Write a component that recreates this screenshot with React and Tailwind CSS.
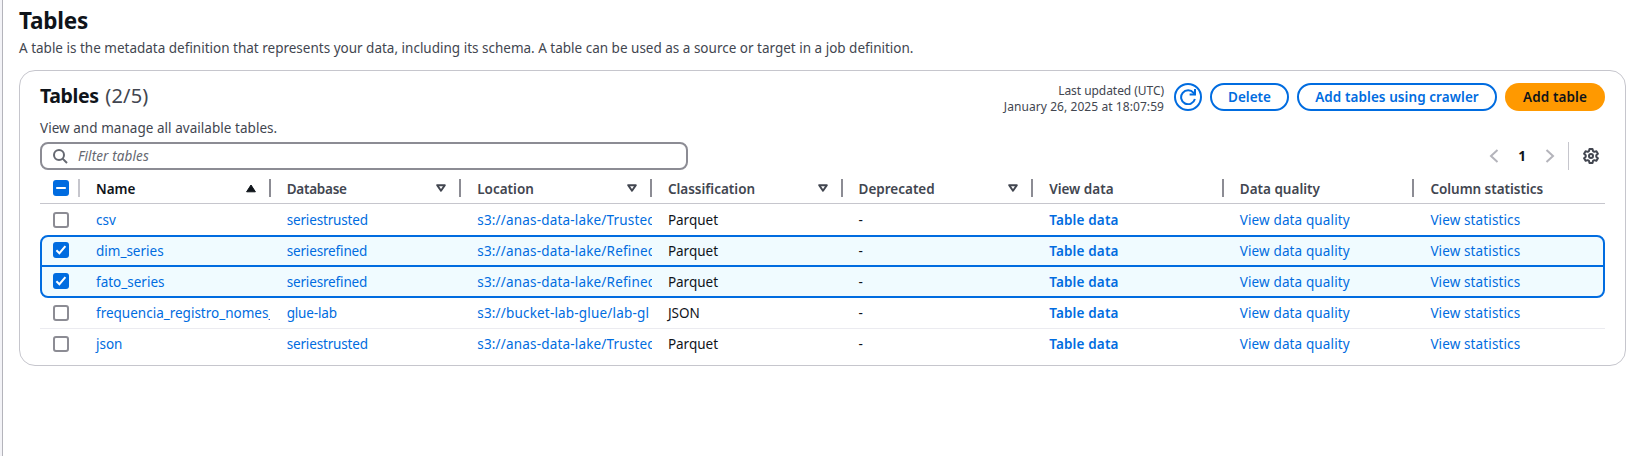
import React from "react";

const COLUMNS = [
  { label: "Name", sort: "asc" },
  { label: "Database", sort: "none", track: "tracking-[-0.25px]" },
  { label: "Location", sort: "none" },
  { label: "Classification", sort: "none" },
  { label: "Deprecated", sort: "none" },
  { label: "View data" },
  { label: "Data quality" },
  { label: "Column statistics", track: "tracking-[-0.03px]" },
];

const ROWS = {
  csv: ["csv", "seriestrusted", "s3://anas-data-lake/Trusted", "Parquet"],
  dim: ["dim_series", "seriesrefined", "s3://anas-data-lake/Refined", "Parquet"],
  fato: ["fato_series", "seriesrefined", "s3://anas-data-lake/Refined", "Parquet"],
  freq: ["frequencia_registro_nomes_", "glue-lab", "s3://bucket-lab-glue/lab-gl", "JSON"],
  json: ["json", "seriestrusted", "s3://anas-data-lake/Trusted", "Parquet"],
};

function Checkbox({ state, className = "" }) {
  if (!state) {
    return <span className={`block size-4 rounded-[3px] border-2 border-[#8c8c94] bg-white ${className}`} />;
  }
  return (
    <span className={`block size-4 rounded-[3px] bg-[#006ce0] ${className}`}>
      <svg viewBox="0 0 16 16" className="size-4" fill="none" stroke="#fff" strokeWidth="2">
        {state === "mixed" ? <path d="M3.2 8h9.6" /> : <path d="M3.4 8.2l3 3L12.4 4.2" />}
      </svg>
    </span>
  );
}

function SortIcon({ sort }) {
  return (
    <svg viewBox="0 0 16 16" className="size-4" strokeLinejoin="round">
      {sort === "asc" ? (
        <path d="M8 5l4.4 6.8H3.6z" fill="#0f141a" stroke="#0f141a" strokeWidth="1" />
      ) : (
        <path d="M4.2 5.2h7.6L8 10.8z" fill="none" stroke="#424650" strokeWidth="2" />
      )}
    </svg>
  );
}

function Row({ row, checked, inset, className }) {
  const [name, database, location, classification] = row;
  return (
    <div className={`grid text-[#006ce0] ${inset ? "grid-cols-[38px_repeat(8,190.625px)]" : "grid-cols-[40px_repeat(8,190.625px)]"} ${className}`}>
      <div className={inset ? "pl-[11px]" : "pl-[13px]"}>
        <Checkbox state={checked ? "on" : null} className={checked ? "mt-px" : "mt-0.5"} />
      </div>
      <div className="mr-px overflow-hidden whitespace-nowrap pl-4">{name}</div>
      <div className="overflow-hidden whitespace-nowrap pl-4 tracking-[-0.15px]">{database}</div>
      <div className="overflow-hidden whitespace-nowrap pl-4 tracking-[0.18px]">{location}</div>
      <div className="pl-4 text-[#0f141a]">{classification}</div>
      <div className="pl-4 text-[#0f141a]">-</div>
      <div className="pl-4 font-semibold tracking-[0.16px]">Table data</div>
      <div className="pl-4 tracking-[0.13px]">View data quality</div>
      <div className="pl-4 tracking-[0.12px]">View statistics</div>
    </div>
  );
}

export default function App() {
  return (
    <div className="flex h-[456px] w-[1642px] overflow-hidden bg-white font-['Noto_Sans',sans-serif] text-[13.5px] leading-5 text-[#0f141a]">
      <div className="w-[3px] shrink-0 border-r border-[#b4b4bb] bg-[#f3f3f7]" />
      <main className="w-[1623px] pl-4">
        <h1 className="mt-1.5 h-[30px] text-[22.5px] font-bold leading-[30px] tracking-[-0.2px]">Tables</h1>
        <p className="mt-0.5 h-5 text-[#424650]">
          A table is the metadata definition that represents your data, including its schema. A table can be used as a source or target in a job definition.
        </p>

        <section className="mt-3 h-[296px] rounded-2xl border border-[#c6c6cd] px-5">
          <div className="flex h-[46px] justify-between">
            <h2 className="mt-[13px] h-6 text-[19.5px] font-bold leading-6 tracking-[-0.4px]">
              Tables <span className="ml-0.5 text-[20px] font-normal tracking-[0.2px] text-[#424650]">(2/5)</span>
            </h2>
            <div className="mt-3 flex h-7 text-sm font-semibold">
              <div className="mr-2.5 text-right text-xs font-normal leading-4 text-[#424650]">
                <div className="tracking-[-0.05px]">Last updated (UTC)</div>
                <div className="tracking-[0.07px]">January 26, 2025 at 18:07:59</div>
              </div>
              <button className="mr-2 flex size-7 items-center justify-center rounded-full border-2 border-[#006ce0]">
                <svg viewBox="0 0 16 16" className="size-4" fill="none" stroke="#006ce0" strokeWidth="2">
                  <path d="M14.9 10.1A7 7 0 1 1 13.6 3.9L14.9 5.6" />
                  <path d="M15 0v5.6H9.6" />
                </svg>
              </button>
              <button className="mr-2 h-7 w-[79px] rounded-full border-2 border-[#006ce0] text-[13.5px] leading-6 text-[#006ce0]">Delete</button>
              <button className="mr-2 h-7 w-[200px] rounded-full border-2 border-[#006ce0] text-[13.5px] leading-6 tracking-[0.07px] text-[#006ce0]">Add tables using crawler</button>
              <button className="h-7 w-[100px] rounded-full bg-[#ff9900] text-[13.5px] leading-7 tracking-[0.1px]">Add table</button>
            </div>
          </div>
          <p className="h-[25px] pt-px tracking-[0.04px] text-[#424650]">View and manage all available tables.</p>

          <div className="flex h-7 items-center justify-between">
            <div className="flex h-7 w-[648px] items-center rounded-lg border-2 border-[#8c8c94]">
              <svg viewBox="0 0 16 16" className="ml-2.5 size-4" fill="none" stroke="#656871" strokeWidth="2">
                <circle cx="7" cy="7" r="5" />
                <path d="M10.6 10.6L15 15" />
              </svg>
              <span className="ml-2.5 italic tracking-[0.1px] text-[#656871]">Filter tables</span>
            </div>
            <div className="flex h-7 items-center">
              <svg viewBox="0 0 16 16" className="size-4" fill="none" stroke="#b4b4bb" strokeWidth="2">
                <path d="M11.5 2L5 8l6.5 6" />
              </svg>
              <span className="w-10 text-center font-bold">1</span>
              <svg viewBox="0 0 16 16" className="size-4" fill="none" stroke="#b4b4bb" strokeWidth="2">
                <path d="M4.5 2L11 8l-6.5 6" />
              </svg>
              <span className="ml-2.5 h-7 w-px bg-[#c6c6cd]" />
              <svg viewBox="0 0 16 16" className="ml-3.5 mr-1.5 size-4" fill="none" stroke="#424650" strokeWidth="2" strokeLinejoin="round">
                <path d="M6.5 1h3l.5 2.1 1.3.75 2.1-.65 1.5 2.6L13.3 7.2v1.6l1.6 1.4-1.5 2.6-2.1-.65-1.3.75L9.5 15h-3L6 12.9l-1.3-.75-2.1.65-1.5-2.6 1.6-1.4V7.2L1.1 5.8l1.5-2.6 2.1.65L6 3.1z" />
                <circle cx="8" cy="8" r="2" />
              </svg>
            </div>
          </div>

          <div className="mt-1 grid h-[30px] grid-cols-[40px_repeat(8,190.625px)] border-b border-[#c6c6cd] pt-[5px] font-semibold text-[#424650]">
            <div className="flex justify-between pl-[13px]">
              <Checkbox state="mixed" className="mt-px" />
              <span className="h-[18px] w-0.5 bg-[#c6c6cd]" />
            </div>
            {COLUMNS.map(({ label, sort, track = "" }, i) => (
              <div key={label} className="flex h-[18px] pl-4">
                <span className={`${track} ${i === 0 ? "text-[#0f141a]" : ""}`}>{label}</span>
                <span className="ml-auto mr-2.5 mt-px">{sort && <SortIcon sort={sort} />}</span>
                {i < 7 && <span className="h-[18px] w-0.5 bg-[#8c8c94]" />}
              </div>
            ))}
          </div>

          <Row row={ROWS.csv} className="h-[31px] pt-1.5" />
          <div className="h-[63px] rounded-lg border-2 border-[#006ce0] bg-[#f0fbff]">
            <Row row={ROWS.dim} checked inset className="h-[30px] border-b-2 border-[#006ce0] pt-1" />
            <Row row={ROWS.fato} checked inset className="h-[29px] pt-[5px]" />
          </div>
          <Row row={ROWS.freq} className="h-[31px] border-b border-[#ebebf0] pt-[5px]" />
          <Row row={ROWS.json} className="h-[30px] pt-[5px]" />
        </section>
      </main>
    </div>
  );
}
